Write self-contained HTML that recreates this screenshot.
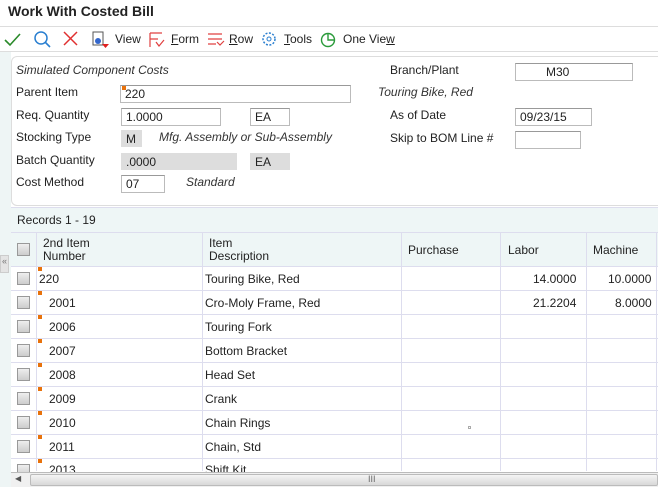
<!DOCTYPE html><html><head><style>
*{margin:0;padding:0;box-sizing:border-box}
body{width:658px;height:487px;overflow:hidden;background:#fff;font-family:"Liberation Sans",sans-serif;font-size:12px;color:#222;position:relative}
.a{position:absolute;white-space:nowrap}
.in{position:absolute;height:18px;border:1px solid #bbb;border-top-color:#999;background:#fff;font-size:12px;padding:2px 4px;line-height:13px}
.ro{background:#ddd;border-color:#ddd}
.i{font-style:italic;color:#333}
.cb{position:absolute;width:13px;height:13px;border:1px solid #999;background:linear-gradient(#eee,#ccc);left:17px}
.g{font-family:"Liberation Sans",sans-serif;font-size:12px}
.vl{position:absolute;top:233px;height:238px;width:1px;background:#dde}
.hl{position:absolute;left:11px;width:647px;height:1px;background:#dde}
.mk{position:absolute;width:4px;height:4px;background:#e8720c}
</style></head><body>
<div class="a" style="left:8px;top:3px;font-size:14px;font-weight:bold;color:#222">Work With Costed Bill</div>
<div style="position:absolute;left:0;top:26px;width:658px;height:1px;background:#ddd"></div>
<svg class="a" style="left:4px;top:30px" width="400" height="20">
<path d="M1 10l5 5 10-11" stroke="#2a8a2a" stroke-width="1.6" fill="none"/>
<circle cx="37" cy="8" r="6" stroke="#2a7fd0" stroke-width="1.5" fill="none"/><path d="M41 12l5 5" stroke="#2a7fd0" stroke-width="1.6"/>
<path d="M60 2l13 13M73 2l-13 13" stroke="#e03030" stroke-width="1.5"/>
<rect x="89" y="2" width="10" height="13" fill="#fff" stroke="#555"/><circle cx="94" cy="11" r="3" fill="#36c" /><path d="M98 14l7 0-3.5 4z" fill="#e02020"/>
<path d="M146 3h12M146 3v14M146 9h8M152 12l3 4 5-6" stroke="#e04040" stroke-width="1.2" fill="none"/>
<path d="M204 4h14M204 9h14M204 14h8M213 12l3 3 4-4" stroke="#e04040" stroke-width="1.2" fill="none"/>
<circle cx="265" cy="9" r="6" stroke="#2a7fd0" stroke-width="1.5" fill="none" stroke-dasharray="2 1.5"/><circle cx="265" cy="9" r="2" stroke="#2a7fd0" fill="none"/>
<circle cx="324" cy="10" r="6.5" stroke="#2a9a3a" stroke-width="1.4" fill="none"/><path d="M324 3.5v6.5h6.5" stroke="#2a9a3a" stroke-width="1.4" fill="#fff"/>
</svg>
<div class="a" style="left:115px;top:32px">View</div>
<div class="a" style="left:171px;top:32px"><u>F</u>orm</div>
<div class="a" style="left:229px;top:32px"><u>R</u>ow</div>
<div class="a" style="left:284px;top:32px"><u>T</u>ools</div>
<div class="a" style="left:343px;top:32px">One Vie<u>w</u></div>
<div style="position:absolute;left:0;top:51px;width:658px;height:1px;background:#ddd"></div>
<div style="position:absolute;left:0;top:52px;width:11px;height:435px;background:#eef5f5"></div>
<div style="position:absolute;left:11px;top:56px;width:660px;height:150px;border:1px solid #ddd;border-radius:6px;background:#fff"></div>
<div class="a i" style="left:16px;top:63px">Simulated Component Costs</div>
<div class="a" style="left:16px;top:85px">Parent Item</div>
<div class="in" style="left:120px;top:85px;width:231px">220</div><div class="mk" style="left:122px;top:86px"></div>
<div class="a" style="left:16px;top:108px">Req. Quantity</div>
<div class="in" style="left:121px;top:108px;width:100px">1.0000</div>
<div class="in" style="left:250px;top:108px;width:40px">EA</div>
<div class="a" style="left:16px;top:130px">Stocking Type</div>
<div class="in ro" style="left:121px;top:130px;width:21px;height:17px">M</div>
<div class="a i" style="left:159px;top:130px">Mfg. Assembly or Sub-Assembly</div>
<div class="a" style="left:16px;top:153px">Batch Quantity</div>
<div class="in ro" style="left:121px;top:153px;width:116px;height:17px">.0000</div>
<div class="in ro" style="left:250px;top:153px;width:40px;height:17px">EA</div>
<div class="a" style="left:16px;top:175px">Cost Method</div>
<div class="in" style="left:121px;top:175px;width:44px">07</div>
<div class="a i" style="left:186px;top:175px">Standard</div>
<div class="a" style="left:390px;top:63px">Branch/Plant</div>
<div class="in" style="left:515px;top:63px;width:118px;padding-left:30px">M30</div>
<div class="a i" style="left:378px;top:85px">Touring Bike, Red</div>
<div class="a" style="left:390px;top:108px">As of Date</div>
<div class="in" style="left:515px;top:108px;width:77px">09/23/15</div>
<div class="a" style="left:390px;top:131px">Skip to BOM Line #</div>
<div class="in" style="left:515px;top:131px;width:66px"></div>
<div style="position:absolute;left:11px;top:207px;width:647px;height:59px;background:#eef6f6;border-top:1px solid #dde"></div>
<div class="a" style="left:17px;top:213px">Records 1 - 19</div>
<div class="hl" style="top:232px"></div>
<div style="position:absolute;left:0;top:255px;width:9px;height:18px;background:#e4e4e4;border:1px solid #ccc;font-size:9px;color:#777;text-align:center">«</div>
<div class="cb" style="top:243px"></div>
<div class="a" style="left:43px;top:237px;line-height:13px">2nd Item<br>Number</div>
<div class="a" style="left:209px;top:237px;line-height:13px">Item<br>Description</div>
<div class="a" style="left:408px;top:243px">Purchase</div>
<div class="a" style="left:508px;top:243px">Labor</div>
<div class="a" style="left:593px;top:243px">Machine</div>
<div class="vl" style="left:36px"></div><div class="vl" style="left:202px"></div><div class="vl" style="left:401px"></div><div class="vl" style="left:500px"></div><div class="vl" style="left:586px"></div><div class="vl" style="left:656px"></div>
<div class="hl" style="top:266px"></div>
<div class="g">
<div class="hl" style="top:290px"></div><div class="hl" style="top:314px"></div><div class="hl" style="top:338px"></div><div class="hl" style="top:362px"></div><div class="hl" style="top:386px"></div><div class="hl" style="top:410px"></div><div class="hl" style="top:434px"></div><div class="hl" style="top:458px"></div>
<div class="cb" style="top:272px"></div><div class="mk" style="left:38px;top:267px"></div><div class="a" style="left:39px;top:272px">220</div><div class="a" style="left:205px;top:272px">Touring Bike, Red</div><div class="a" style="left:533px;top:272px">14.0000</div><div class="a" style="left:608px;top:272px">10.0000</div>
<div class="cb" style="top:296px"></div><div class="mk" style="left:38px;top:291px"></div><div class="a" style="left:49px;top:296px">2001</div><div class="a" style="left:205px;top:296px">Cro-Moly Frame, Red</div><div class="a" style="left:533px;top:296px">21.2204</div><div class="a" style="left:615px;top:296px">8.0000</div>
<div class="cb" style="top:320px"></div><div class="mk" style="left:38px;top:315px"></div><div class="a" style="left:49px;top:320px">2006</div><div class="a" style="left:205px;top:320px">Touring Fork</div>
<div class="cb" style="top:344px"></div><div class="mk" style="left:38px;top:339px"></div><div class="a" style="left:49px;top:344px">2007</div><div class="a" style="left:205px;top:344px">Bottom Bracket</div>
<div class="cb" style="top:368px"></div><div class="mk" style="left:38px;top:363px"></div><div class="a" style="left:49px;top:368px">2008</div><div class="a" style="left:205px;top:368px">Head Set</div>
<div class="cb" style="top:392px"></div><div class="mk" style="left:38px;top:387px"></div><div class="a" style="left:49px;top:392px">2009</div><div class="a" style="left:205px;top:392px">Crank</div>
<div class="cb" style="top:416px"></div><div class="mk" style="left:38px;top:411px"></div><div class="a" style="left:49px;top:416px">2010</div><div class="a" style="left:205px;top:416px">Chain Rings</div>
<div class="a" style="left:468px;top:426px;width:3px;height:3px;border:1px solid #aaa"></div>
<div class="cb" style="top:440px"></div><div class="mk" style="left:38px;top:435px"></div><div class="a" style="left:49px;top:440px">2011</div><div class="a" style="left:205px;top:440px">Chain, Std</div>
<div style="position:absolute;left:11px;top:459px;width:647px;height:13px;overflow:hidden"><div class="cb" style="top:5px;left:6px"></div><div class="a" style="left:38px;top:4px">2013</div><div class="a" style="left:194px;top:4px">Shift Kit</div></div>
<div class="mk" style="left:38px;top:459px"></div>
</div>
<div style="position:absolute;left:11px;top:472px;width:647px;height:15px;background:#f0f0f0;border-top:1px solid #bbb"></div>
<div style="position:absolute;left:30px;top:474px;width:628px;height:12px;background:linear-gradient(#f4f4f4,#d8d8d8);border:1px solid #bbb;border-radius:2px"></div>
<div class="a" style="left:15px;top:474px;font-size:8px;color:#555">◀</div>
<div class="a" style="left:368px;top:474px;font-size:9px;color:#666">III</div>
</body></html>
